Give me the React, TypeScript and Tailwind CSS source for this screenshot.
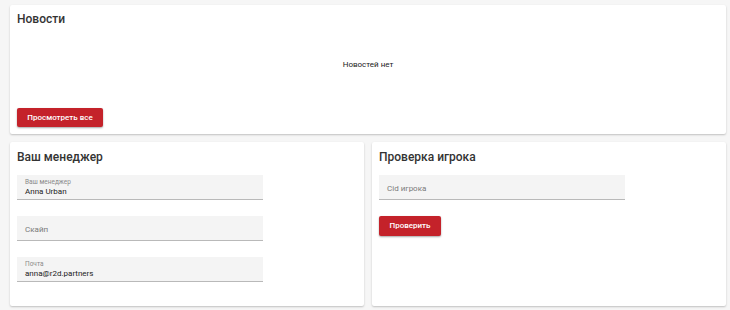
import React from "react"

const font = { fontFamily: "Roboto, 'Liberation Sans', sans-serif" }

function Field({ label, value }: { label: string; value?: string }) {
  return (
    <div className="flex h-[25px] w-[246px] flex-col justify-center border-b border-[#b9b9b9] bg-[#f4f4f4] px-[8px] pt-[1px]">
      {value ? (
        <>
          <div className="text-[6.5px] leading-[8px] text-[#8a8a8a]">{label}</div>
          <div className="text-[8px] leading-[12px] text-[#222]">{value}</div>
        </>
      ) : (
        <div className="pt-[2px] text-[8px] leading-[10px] text-[#7a7a7a]">{label}</div>
      )}
    </div>
  )
}

function RedButton({ children, className }: { children: React.ReactNode; className?: string }) {
  return (
    <button
      className={`flex items-center justify-center rounded-[2px] bg-[#c4222a] text-[8px] font-medium text-white shadow-[0_1px_2px_rgba(0,0,0,0.35)] ${className ?? ""}`}
    >
      {children}
    </button>
  )
}

export default function App() {
  return (
    <div style={font} className="flex h-[310px] w-[730px] flex-col gap-[8px] bg-[#f6f6f6] pl-[10px] pr-[4px] pt-[5px]">
      {/* news */}
      <div className="flex h-[129px] flex-col rounded-[2px] bg-white px-[7px] pt-[6px] shadow-[0_1px_2px_rgba(0,0,0,0.22)]">
        <h2 className="text-[12px] font-medium leading-[16px] text-[#333]">Новости</h2>
        <div className="mt-[33px] text-center text-[8px] leading-[10px] text-[#222]">Новостей нет</div>
        <RedButton className="mt-[38px] h-[19px] w-[86px]">Просмотреть все</RedButton>
      </div>

      <div className="grid h-[164px] grid-cols-2 gap-[8px]">
        {/* manager */}
        <div className="flex flex-col rounded-[2px] bg-white px-[7px] pt-[7px] shadow-[0_1px_2px_rgba(0,0,0,0.22)]">
          <h2 className="text-[12px] font-medium leading-[16px] text-[#333]">Ваш менеджер</h2>
          <div className="mt-[10px] flex flex-col gap-[16px]">
            <Field label="Ваш менеджер" value="Anna Urban" />
            <Field label="Скайп" />
            <Field label="Почта" value="anna@r2d.partners" />
          </div>
        </div>

        {/* player check */}
        <div className="flex flex-col rounded-[2px] bg-white px-[7px] pt-[7px] shadow-[0_1px_2px_rgba(0,0,0,0.22)]">
          <h2 className="text-[12px] font-medium leading-[16px] text-[#333]">Проверка игрока</h2>
          <div className="mt-[10px]">
            <Field label="Cid игрока" />
          </div>
          <RedButton className="mt-[16px] h-[20px] w-[62px]">Проверить</RedButton>
        </div>
      </div>
    </div>
  )
}
